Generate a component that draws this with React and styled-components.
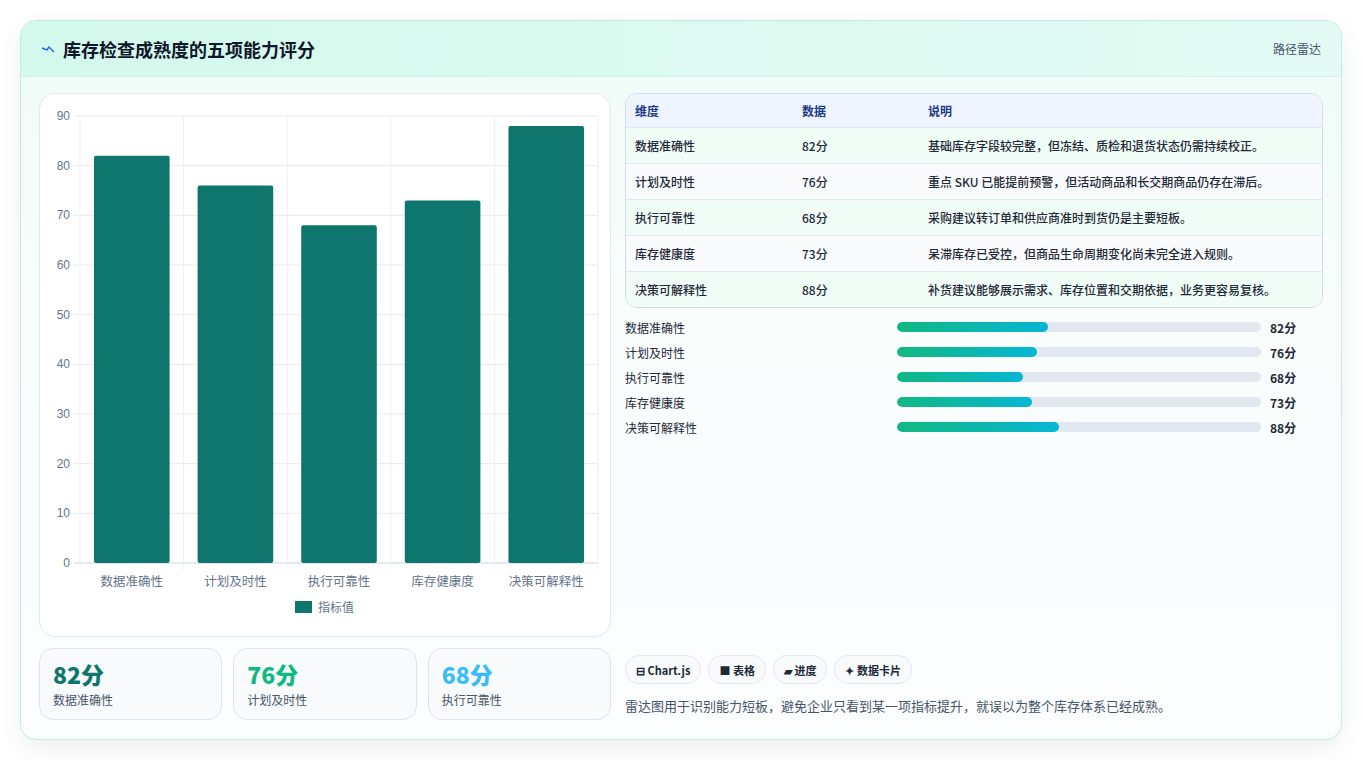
import { styled, createGlobalStyle } from "styled-components";

const GlobalStyle = createGlobalStyle`
  body {
    margin: 0;
    background: #fff;
    font-family: "Noto Sans CJK SC", "Noto Sans", sans-serif;
  }
`;

const data = [
  { name: "数据准确性", value: 82, note: "基础库存字段较完整，但冻结、质检和退货状态仍需持续校正。" },
  { name: "计划及时性", value: 76, note: "重点 SKU 已能提前预警，但活动商品和长交期商品仍存在滞后。" },
  { name: "执行可靠性", value: 68, note: "采购建议转订单和供应商准时到货仍是主要短板。" },
  { name: "库存健康度", value: 73, note: "呆滞库存已受控，但商品生命周期变化尚未完全进入规则。" },
  { name: "决策可解释性", value: 88, note: "补货建议能够展示需求、库存位置和交期依据，业务更容易复核。" },
];

const Page = styled.div`
  padding: 20px 20px 20px 20px;
`;
const Card = styled.div`
  width: 1320px;
  height: 718px;
  border: 1px solid #bfeedd;
  border-radius: 16px;
  overflow: hidden;
  background: linear-gradient(180deg, #eefcf6 0%, #f8fdfc 40%, #fbfdff 100%);
  box-shadow: 0 8px 24px rgba(15, 60, 50, 0.08);
  display: flex;
  flex-direction: column;
`;
const Header = styled.div`
  height: 55px;
  flex-shrink: 0;
  display: flex;
  align-items: center;
  justify-content: space-between;
  padding: 0 20px;
  background: linear-gradient(90deg, #d3f8ec, #e3fbf4);
  border-bottom: 1px solid #d6f3ea;
`;
const Title = styled.h1`
  margin: 0;
  font-size: 18px;
  font-weight: 700;
  color: #0f172a;
  display: flex;
  align-items: center;
  gap: 8px;
`;
const HeaderLink = styled.span`
  font-size: 12px;
  color: #475569;
`;
const Body = styled.div`
  flex: 1;
  display: grid;
  grid-template-columns: 572px 1fr;
  gap: 14px;
  padding: 16px 18px 18px 18px;
`;
const Left = styled.div`
  display: flex;
  flex-direction: column;
  gap: 11px;
`;
const ChartCard = styled.div`
  height: 542px;
  background: #fff;
  border: 1px solid #e2e8f0;
  border-radius: 16px;
`;
const Stats = styled.div`
  display: grid;
  grid-template-columns: repeat(3, 1fr);
  gap: 11px;
`;
const Stat = styled.div`
  height: 72px;
  border: 1px solid #dbe5f0;
  border-radius: 14px;
  background: #f8fafc;
  padding: 10px 13px;
  box-sizing: border-box;
`;
const StatValue = styled.div`
  font-size: 23px;
  font-weight: 800;
  line-height: 30px;
  color: ${(p) => p.color};
`;
const StatLabel = styled.div`
  font-size: 12px;
  color: #475569;
  margin-top: 2px;
`;
const Right = styled.div`
  display: flex;
  flex-direction: column;
`;
const Table = styled.div`
  border: 1px solid #d3dde9;
  border-radius: 12px;
  overflow: hidden;
  font-size: 12px;
`;
const Row = styled.div`
  display: grid;
  grid-template-columns: 167px 126px 1fr;
  height: ${(p) => (p.head ? 33 : 35)}px;
  align-items: center;
  padding-left: 9px;
  background: ${(p) => (p.head ? "#eef5ff" : p.odd ? "#f0fcf6" : "#f8fafc")};
  color: ${(p) => (p.head ? "#1e3a8a" : "#1f2937")};
  font-weight: ${(p) => (p.head ? 600 : 500)};
  border-top: ${(p) => (p.head ? "none" : "1px solid #e2e8f0")};
`;
const Bars = styled.div`
  display: flex;
  flex-direction: column;
  gap: 7px;
  margin-top: 10px;
`;
const BarRow = styled.div`
  display: grid;
  grid-template-columns: 263px 364px 1fr;
  align-items: center;
  column-gap: 9px;
  height: 18px;
  font-size: 12px;
  color: #1f2937;
`;
const Track = styled.div`
  height: 10px;
  border-radius: 5px;
  background: #e2e8f0;
  overflow: hidden;
`;
const Fill = styled.div`
  height: 100%;
  border-radius: 5px;
  background: linear-gradient(90deg, #10b981, #06b6d4);
`;
const Value = styled.span`
  font-weight: 700;
`;
const Spacer = styled.div`
  flex: 1;
`;
const Chips = styled.div`
  display: flex;
  gap: 7px;
`;
const Chip = styled.span`
  height: 27px;
  padding: 0 10px;
  border: 1px solid #e2e8f0;
  border-radius: 14px;
  background: #f8fafc;
  font-size: 11px;
  font-weight: 700;
  color: #1f2937;
  display: flex;
  align-items: center;
  gap: 3px;
`;
const Note = styled.p`
  margin: 12px 0 6px;
  font-size: 13px;
  color: #475569;
`;

const Chart = () => {
  const x0 = 40, x1 = 558, yTop = 22, yBot = 469;
  const h = yBot - yTop;
  const cw = (x1 - x0) / 5;
  return (
    <svg width="572" height="542" style={{ display: "block" }}>
      {[0, 10, 20, 30, 40, 50, 60, 70, 80, 90].map((t) => {
        const y = yBot - (t / 90) * h;
        return (
          <g key={t}>
            <line x1={x0 - 6} x2={x1} y1={y} y2={y} stroke={t === 0 ? "#cbd5e1" : "#e5e9f0"} />
            <text x={x0 - 10} y={y + 4} textAnchor="end" fontSize="12" fill="#64748b" fontFamily="Liberation Sans, sans-serif">{t}</text>
          </g>
        );
      })}
      {[0, 1, 2, 3, 4, 5].map((i) => (
        <line key={i} x1={x0 + i * cw} x2={x0 + i * cw} y1={yTop} y2={yBot + 6} stroke="#eceff4" />
      ))}
      {data.map((d, i) => {
        const bh = (d.value / 90) * h;
        return (
          <g key={d.name}>
            <rect x={x0 + i * cw + 14} y={yBot - bh} width={cw - 28} height={bh} rx="2" fill="#0f766e" />
            <text x={x0 + i * cw + cw / 2} y={yBot + 23} textAnchor="middle" fontSize="12.5" fill="#64748b">{d.name}</text>
          </g>
        );
      })}
      <rect x="255" y="507" width="17" height="12" fill="#0f766e" />
      <text x="278" y="518" fontSize="12" fill="#64748b">指标值</text>
    </svg>
  );
};

export default function App() {
  return (
    <Page>
      <GlobalStyle />
      <Card>
        <Header>
          <Title>
            <svg width="14" height="10" viewBox="0 0 14 10">
              <path d="M1 4 L6 6 L8 3 L13 8" stroke="#2563eb" strokeWidth="1.4" fill="none" />
            </svg>
            库存检查成熟度的五项能力评分
          </Title>
          <HeaderLink>路径雷达</HeaderLink>
        </Header>
        <Body>
          <Left>
            <ChartCard>
              <Chart />
            </ChartCard>
            <Stats>
              <Stat><StatValue color="#0f766e">82分</StatValue><StatLabel>数据准确性</StatLabel></Stat>
              <Stat><StatValue color="#10b981">76分</StatValue><StatLabel>计划及时性</StatLabel></Stat>
              <Stat><StatValue color="#38bdf8">68分</StatValue><StatLabel>执行可靠性</StatLabel></Stat>
            </Stats>
          </Left>
          <Right>
            <Table>
              <Row head><span>维度</span><span>数据</span><span>说明</span></Row>
              {data.map((d, i) => (
                <Row key={d.name} odd={i % 2 === 0}>
                  <span>{d.name}</span><span>{d.value}分</span><span>{d.note}</span>
                </Row>
              ))}
            </Table>
            <Bars>
              {data.map((d) => (
                <BarRow key={d.name}>
                  <span>{d.name}</span>
                  <Track><Fill style={{ width: `${d.value / 2 + 0.5}%` }} /></Track>
                  <Value>{d.value}分</Value>
                </BarRow>
              ))}
            </Bars>
            <Spacer />
            <Chips>
              <Chip>⊟ Chart.js</Chip>
              <Chip>■ 表格</Chip>
              <Chip>▰ 进度</Chip>
              <Chip>✦ 数据卡片</Chip>
            </Chips>
            <Note>雷达图用于识别能力短板，避免企业只看到某一项指标提升，就误以为整个库存体系已经成熟。</Note>
          </Right>
        </Body>
      </Card>
    </Page>
  );
}
